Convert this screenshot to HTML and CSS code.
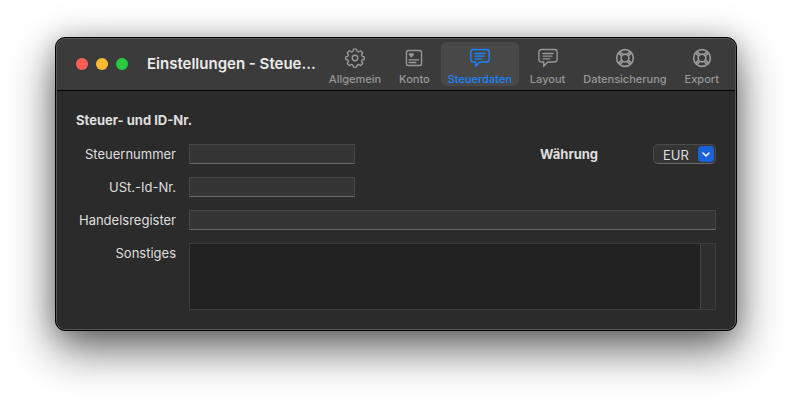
FILE: index.html
```
<!DOCTYPE html>
<html lang="de">
<head>
    <meta charset="UTF-8">
    <meta name="viewport" content="width=device-width, initial-scale=1.0">
    <title>Einstellungen - Steuerdaten</title>
    <link rel="stylesheet" href="styles.css">
</head>
<body>

    <div class="window">
        <!-- Symbolleiste -->
        <header class="toolbar">
            <div class="lights">
                <button class="light close" aria-label="Schließen"></button>
                <button class="light minimize" aria-label="Minimieren"></button>
                <button class="light maximize" aria-label="Maximieren"></button>
            </div>
            <h1>Einstellungen - Steue...</h1>
            <nav class="tabs">
                <button class="tab">
                    <svg width="22" height="22" viewBox="0 0 22 22">
                        <path d="M9.3 1.2h3.4l.6 2.5 1.6.7 2.3-1.4 2.3 2.3-1.3 2.2.7 1.7 2.3.6v2.6l-2.3.8-.7 1.6 1.3 2.2-2.3 2.3-2.3-1.3-1.6.7-.6 2.3H9.3l-.6-2.3-1.6-.7-2.3 1.3-2.3-2.3 1.3-2.2-.7-1.6-2.3-.7V9.800l2.300-.6.7-1.700-1.300-2.200L4.800 3l2.300 1.400 1.600-.7z"/>
                        <circle cx="11" cy="11" r="3"/>
                    </svg>
                    <span>Allgemein</span>
                </button>
                <button class="tab">
                    <svg width="22" height="22" viewBox="0 0 22 22">
                        <rect x="2.7" y="2.7" width="16.6" height="16.6" rx="2"/>
                        <path d="M5.5 13H16M5.5 16H13"/>
                        <path class="solid" d="M8 10.6 5.600 8.100C4.300 6.500 6.600 4.500 8 6.100c1.400-1.600 3.700.4 2.400 2z"/>
                    </svg>
                    <span>Konto</span>
                </button>
                <button class="tab active">
                    <svg width="22" height="22" viewBox="0 0 22 22">
                        <path d="M3.7 1.7h14.600q2.700 0 2.700 2.700v8.300q0 2.700-2.700 2.700h-7.600L6.300 20v-4.600H3.700Q1 15.400 1 12.700V4.400q0-2.700 2.700-2.700z"/>
                        <path d="M5.5 6h11M5.500 9h10M5.500 12H13"/>
                    </svg>
                    <span>Steuerdaten</span>
                </button>
                <button class="tab">
                    <svg width="22" height="22" viewBox="0 0 22 22">
                        <path d="M3.7 1.7h14.600q2.700 0 2.700 2.700v8.300q0 2.700-2.700 2.700h-7.600L6.300 20v-4.600H3.700Q1 15.400 1 12.700V4.400q0-2.700 2.700-2.700z"/>
                        <path d="M5.5 6h11M5.500 9h10M5.500 12H13"/>
                    </svg>
                    <span>Layout</span>
                </button>
                <button class="tab">
                    <svg class="ring" width="22" height="22" viewBox="0 0 22 22">
                        <circle cx="11" cy="11" r="9.2"/>
                        <circle cx="11" cy="11" r="4.3"/>
                        <path d="M5.5 4l3.200 3.200M4 5.500l3.200 3.200M16.500 4l-3.200 3.200M18 5.500l-3.200 3.200M5.500 18l3.200-3.200M4 16.500l3.200-3.200M16.500 18l-3.200-3.200M18 16.500l-3.200-3.200"/>
                    </svg>
                    <span>Datensicherung</span>
                </button>
                <button class="tab">
                    <svg class="ring" width="22" height="22" viewBox="0 0 22 22">
                        <circle cx="11" cy="11" r="9.2"/>
                        <circle cx="11" cy="11" r="4.3"/>
                        <path d="M5.5 4l3.200 3.200M4 5.500l3.200 3.200M16.500 4l-3.200 3.200M18 5.500l-3.200 3.200M5.500 18l3.200-3.200M4 16.500l3.200-3.200M16.500 18l-3.200-3.200M18 16.500l-3.200-3.200"/>
                    </svg>
                    <span>Export</span>
                </button>
            </nav>
        </header>

        <!-- Steuerdaten -->
        <form class="content">
            <h2>Steuer- und ID-Nr.</h2>
            <div class="fields">
                <label for="steuernummer">Steuernummer</label>
                <div class="line">
                    <input type="text" class="short" id="steuernummer" name="steuernummer">
                    <div class="currency">
                        <label for="waehrung">Währung</label>
                        <div class="select">
                            <select id="waehrung" name="waehrung">
                                <option>EUR</option>
                                <option>CHF</option>
                                <option>USD</option>
                            </select>
                            <svg class="arrow" width="16" height="16" viewBox="0 0 16 16">
                                <path d="M5 7l3 3 3-3"/>
                            </svg>
                        </div>
                    </div>
                </div>

                <label for="ustid">USt.-Id-Nr.</label>
                <input type="text" class="short" id="ustid" name="ustid">

                <label for="handelsregister">Handelsregister</label>
                <input type="text" id="handelsregister" name="handelsregister">

                <label for="sonstiges">Sonstiges</label>
                <div class="notes">
                    <textarea id="sonstiges" name="sonstiges"></textarea>
                    <div class="track"></div>
                </div>
            </div>
        </form>
    </div>

</body>
</html>
```
FILE: styles.css
```
* {
    box-sizing: border-box;
}

body {
    margin: 0;
    padding: 37px 55px 73px;
    background-color: #fff;
    color: #dfdfdf;
    font-family: Inter, "Liberation Sans", sans-serif;
    font-size: 13px;
    line-height: 20px;
}

button, input, select, textarea {
    margin: 0;
    padding: 0;
    border: none;
    border-radius: 0;
    font: inherit;
    color: inherit;
}

.window {
    overflow: hidden;
    border: 1px solid #000;
    border-radius: 10px;
    background-color: #2b2b2b;
    box-shadow: 0 18px 46px rgba(0, 0, 0, 0.6), 0 2px 24px rgba(0, 0, 0, 0.2);
    position: relative;
}

/* helle Innenkante */
.window::after {
    content: "";
    position: absolute;
    inset: 0;
    border: 1px solid #555;
    border-radius: 9px;
    pointer-events: none;
}

.toolbar {
    display: flex;
    align-items: center;
    height: 53px;
    padding: 0 10px 0 20px;
    background-color: #3b3b3b;
    border-bottom: 1px solid #000;
}

.lights {
    display: flex;
    gap: 8px;
    margin-right: 19px;
}

.light {
    width: 12px;
    height: 12px;
    border-radius: 50%;
}

.close {
    background-color: #ff5f57;
}

.minimize {
    background-color: #febc2e;
}

.maximize {
    background-color: #28c840;
}

h1 {
    margin: 0;
    font-size: 15px;
    font-weight: 600;
    color: #ebebeb;
    white-space: nowrap;
}

.tabs {
    display: flex;
    gap: 4px;
    margin-left: auto;
}

.tab {
    display: flex;
    flex-direction: column;
    align-items: center;
    gap: 4px;
    height: 44px;
    padding: 6px 7px 0;
    border-radius: 6px;
    background: none;
    color: #989898;
    font-size: 11px;
    font-weight: 500;
    line-height: 14px;
}

.tab.active {
    background-color: #484848;
    color: #1a84ff;
}

svg {
    fill: none;
    stroke: currentColor;
    stroke-width: 1.5;
    stroke-linecap: round;
    stroke-linejoin: round;
}

.ring {
    stroke-width: 1.8;
}

.solid {
    fill: currentColor;
    stroke: none;
}

.content {
    padding: 19px 20px 20px;
}

h2 {
    margin: 0 0 14px;
    font-size: 13px;
    font-weight: 700;
}

.fields {
    display: grid;
    grid-template-columns: 100px 1fr;
    gap: 13px;
}

.fields > label {
    text-align: right;
}

input {
    width: 100%;
    height: 20px;
    padding: 0 4px;
    background-color: #353535;
    border: 1px solid #474747;
    border-bottom-color: #6a6a6a;
}

.short {
    width: 166px;
}

.line, .currency {
    display: flex;
    justify-content: space-between;
}

.currency {
    width: 176px;
    font-weight: 700;
}

.select {
    display: flex;
    position: relative;
    font-weight: 400;
}

select {
    appearance: none;
    width: 63px;
    height: 20px;
    padding-left: 9px;
    background-color: #353535;
    border: 1px solid #4a4a4a;
    border-bottom-color: #6a6a6a;
    border-radius: 5px;
}

.arrow {
    position: absolute;
    top: 2px;
    right: 2px;
    border-radius: 4px;
    background-color: #1b62d8;
    color: #fff;
    pointer-events: none;
}

.notes {
    display: flex;
    height: 67px;
    border: 1px solid #3c3c3c;
}

textarea {
    flex: 1;
    resize: none;
    padding: 2px 4px;
    background-color: #212121;
}

.track {
    width: 15px;
    background-color: #2e2e2e;
    border-left: 1px solid #444;
}
```
